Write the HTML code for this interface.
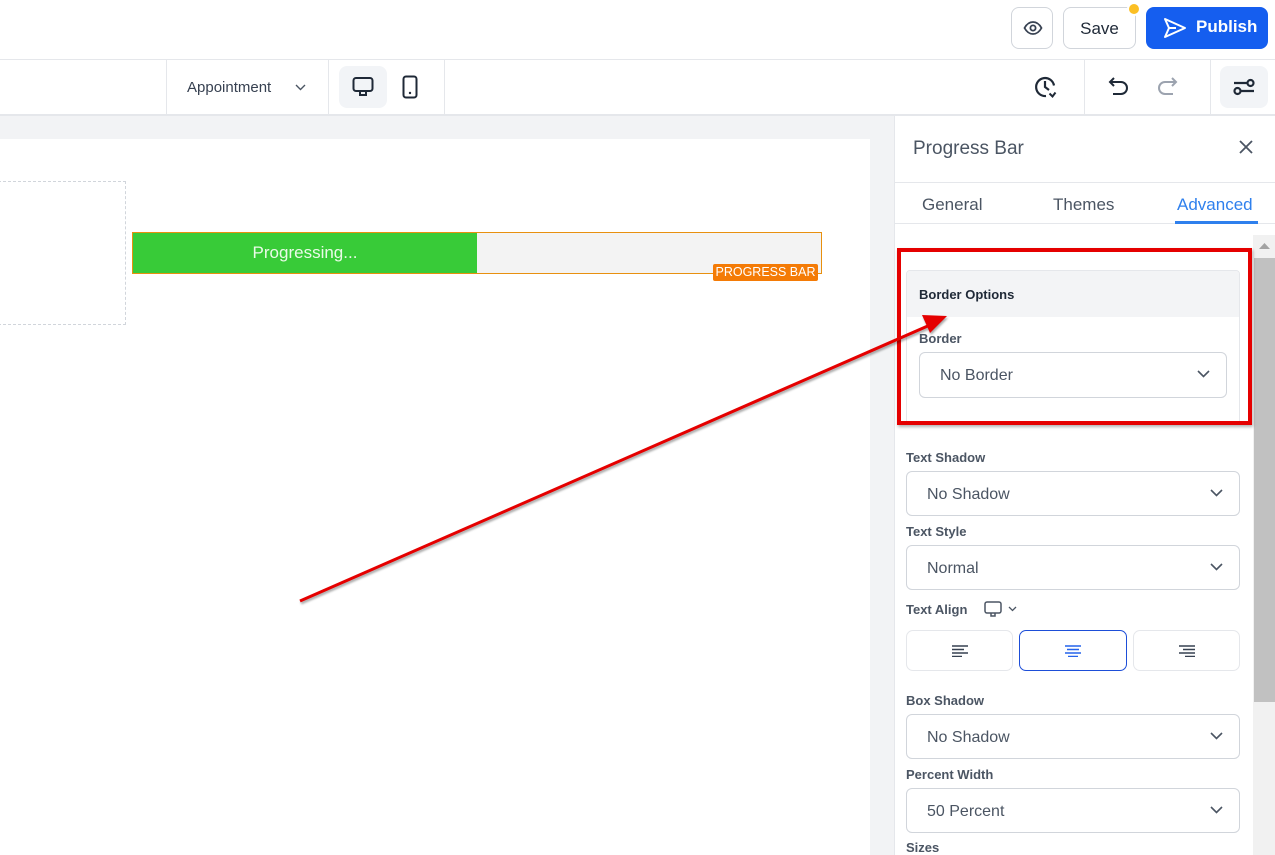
<!DOCTYPE html>
<html><head><meta charset="utf-8"><style>
*{box-sizing:border-box;margin:0;padding:0}
body{width:1275px;height:855px;overflow:hidden;position:relative;background:#fff;font-family:"Liberation Sans",sans-serif;color:#374151}
.a{position:absolute}
.lbl{position:absolute;left:906px;font-size:13px;font-weight:bold;color:#4b5563}
.sel{position:absolute;left:906px;width:334px;height:45px;border:1px solid #d1d5db;border-radius:6px;font-size:16px;color:#4b5563;padding:14px 0 0 20px}
.sel svg{position:absolute;right:16px;top:17px}
.btn{position:absolute;top:630px;height:41px;border:1px solid #e5e7eb;border-radius:7px}
.btn svg{position:absolute;left:50%;top:50%;transform:translate(-50%,-50%)}
</style></head><body>
<div class="a" style="left:0;top:59px;width:1275px;height:1px;background:#e5e7eb"></div>
<div class="a" style="left:1011px;top:7px;width:42px;height:42px;border:1px solid #d1d5db;border-radius:8px">
<svg class="a" style="left:11px;top:12px" width="20" height="16" viewBox="0 0 20 16"><path d="M1.5 8C4 3.5 7 2 10 2s6 1.5 8.5 6C16 12.5 13 14 10 14S4 12.5 1.5 8z" fill="none" stroke="#374151" stroke-width="1.8"/><circle cx="10" cy="8" r="2.6" fill="none" stroke="#374151" stroke-width="1.8"/></svg></div>
<div class="a" style="left:1063px;top:7px;width:73px;height:42px;border:1px solid #d1d5db;border-radius:8px;font-size:17px;color:#1f2937;text-align:center;line-height:42px">Save</div>
<div class="a" style="left:1127px;top:2px;width:14px;height:14px;border-radius:50%;background:#fbbf24;border:2px solid #fff"></div>
<div class="a" style="left:1146px;top:7px;width:122px;height:42px;border-radius:8px;background:#155eef;color:#fff;font-size:17px;font-weight:bold;line-height:40px;padding-left:50px">Publish
<svg class="a" style="left:17px;top:10px" width="24" height="22" viewBox="0 0 24 22"><path d="M2 2l20 9-20 9 4-9z M6 11h7" fill="none" stroke="#fff" stroke-width="2" stroke-linejoin="round"/></svg></div>

<div class="a" style="left:0;top:114px;width:1275px;height:2px;background:#e5e7eb"></div>
<div class="a" style="left:166px;top:60px;width:1px;height:54px;background:#e5e7eb"></div>
<div class="a" style="left:328px;top:60px;width:1px;height:54px;background:#e5e7eb"></div>
<div class="a" style="left:444px;top:60px;width:1px;height:54px;background:#e5e7eb"></div>
<div class="a" style="left:1084px;top:60px;width:1px;height:54px;background:#e5e7eb"></div>
<div class="a" style="left:1210px;top:60px;width:1px;height:54px;background:#e5e7eb"></div>
<div class="a" style="left:187px;top:79px;font-size:15px;color:#374151">Appointment</div>
<svg class="a" style="left:295px;top:84px" width="11" height="7" viewBox="0 0 11 7"><path d="M1 1l4.5 4.5L10 1" fill="none" stroke="#4b5563" stroke-width="1.4"/></svg>
<div class="a" style="left:339px;top:66px;width:48px;height:42px;background:#f2f4f7;border-radius:8px"></div>
<svg class="a" style="left:352px;top:76px" width="22" height="22" viewBox="0 0 22 22"><rect x="1.5" y="2" width="19" height="13" rx="2.5" fill="none" stroke="#1f2937" stroke-width="2"/><path d="M8 15v4h6v-4" fill="none" stroke="#1f2937" stroke-width="2"/></svg>
<svg class="a" style="left:402px;top:75px" width="16" height="24" viewBox="0 0 16 24"><rect x="1.5" y="1.5" width="13" height="21" rx="2.5" fill="none" stroke="#1f2937" stroke-width="2"/><circle cx="8" cy="18" r="1.2" fill="#1f2937"/></svg>
<svg class="a" style="left:1034px;top:75px" width="24" height="24" viewBox="0 0 24 24"><path d="M20 10.5A9 9 0 1 0 12 21" fill="none" stroke="#1f2937" stroke-width="2.2"/><path d="M11 6v6l4 3" fill="none" stroke="#1f2937" stroke-width="2.2"/><path d="M15.5 18.5l3 3 3-4" fill="none" stroke="#1f2937" stroke-width="2"/></svg>
<svg class="a" style="left:1108px;top:76px" width="22" height="20" viewBox="0 0 22 20"><path d="M6 2L2 6l4 4M2 6h11a6 6 0 0 1 0 12H5" fill="none" stroke="#1f2937" stroke-width="2"/></svg>
<svg class="a" style="left:1156px;top:76px" width="22" height="20" viewBox="0 0 22 20"><path d="M16 2l4 4-4 4M20 6H9a6 6 0 0 0 0 12h8" fill="none" stroke="#9ca3af" stroke-width="2"/></svg>
<div class="a" style="left:1220px;top:66px;width:48px;height:42px;background:#f2f4f7;border-radius:8px"></div>
<svg class="a" style="left:1232px;top:77px" width="24" height="20" viewBox="0 0 24 20"><path d="M2 6h13M9 14h13" stroke="#1f2937" stroke-width="2.2"/><circle cx="18.5" cy="6" r="3" fill="#f2f4f7" stroke="#1f2937" stroke-width="2.2"/><circle cx="5.5" cy="14" r="3" fill="#f2f4f7" stroke="#1f2937" stroke-width="2.2"/></svg>

<div class="a" style="left:0;top:116px;width:894px;height:739px;background:#f2f3f5"></div>
<div class="a" style="left:0;top:139px;width:870px;height:716px;background:#fff"></div>
<div class="a" style="left:-2px;top:181px;width:128px;height:144px;border:1px dashed #d1d5db"></div>
<div class="a" style="left:132px;top:232px;width:690px;height:42px;border:1px solid #e8900f;background:#f3f3f3"></div>
<div class="a" style="left:133px;top:233px;width:344px;height:40px;background:#38cb38;color:#eafbe8;font-size:17px;text-align:center;line-height:40px">Progressing...</div>
<div class="a" style="left:713px;top:264px;width:105px;height:17px;background:#f47b06;color:#fff;font-size:12.5px;text-align:center;line-height:17px;border-radius:2px">PROGRESS BAR</div>

<div class="a" style="left:894px;top:116px;width:381px;height:739px;background:#fff;border-left:1px solid #e5e7eb"></div>
<div class="a" style="left:913px;top:138px;font-size:19px;color:#4b5563">Progress Bar</div>
<svg class="a" style="left:1238px;top:139px" width="16" height="16" viewBox="0 0 16 16"><path d="M2 2l12 12M14 2L2 14" stroke="#4b5563" stroke-width="1.8"/></svg>
<div class="a" style="left:895px;top:182px;width:380px;height:1px;background:#e5e7eb"></div>
<div class="a" style="left:895px;top:223px;width:380px;height:1px;background:#e5e7eb"></div>
<div class="a" style="left:922px;top:195px;font-size:17px;color:#4b5563">General</div>
<div class="a" style="left:1053px;top:195px;font-size:17px;color:#4b5563">Themes</div>
<div class="a" style="left:1177px;top:195px;font-size:17px;color:#2f80ed">Advanced</div>
<div class="a" style="left:1175px;top:221px;width:83px;height:3px;background:#2f80ed"></div>

<div class="a" style="left:1253px;top:235px;width:22px;height:620px;background:#f1f1f1"></div>
<svg class="a" style="left:1259px;top:242px" width="11" height="8"><path d="M0 7L5.5 1 11 7z" fill="#a3a3a3"/></svg>
<div class="a" style="left:1254px;top:258px;width:21px;height:444px;background:#c1c1c1"></div>

<div class="a" style="left:906px;top:270px;width:334px;height:155px;border:1px solid #e5e7eb;border-radius:4px;overflow:hidden">
<div style="height:46px;background:#f3f4f6;font-size:13px;font-weight:bold;color:#1f2937;padding:16px 0 0 12px">Border Options</div></div>
<div class="a" style="left:919px;top:331px;font-size:13px;font-weight:bold;color:#4b5563">Border</div>
<div class="sel" style="left:919px;top:352px;width:308px;height:46px">No Border<svg width="13" height="8" viewBox="0 0 13 8"><path d="M1 1l5.5 5.5L12 1" fill="none" stroke="#4b5563" stroke-width="1.6"/></svg></div>
<div class="a" style="left:897px;top:248px;width:355px;height:177px;border:4px solid #e50000;box-shadow:1px 2px 3px rgba(0,0,0,.3)"></div>

<div class="lbl" style="top:450px">Text Shadow</div>
<div class="sel" style="top:471px">No Shadow<svg width="13" height="8" viewBox="0 0 13 8"><path d="M1 1l5.5 5.5L12 1" fill="none" stroke="#4b5563" stroke-width="1.6"/></svg></div>
<div class="lbl" style="top:524px">Text Style</div>
<div class="sel" style="top:545px">Normal<svg width="13" height="8" viewBox="0 0 13 8"><path d="M1 1l5.5 5.5L12 1" fill="none" stroke="#4b5563" stroke-width="1.6"/></svg></div>
<div class="lbl" style="top:602px">Text Align</div>
<svg class="a" style="left:984px;top:601px" width="36" height="16" viewBox="0 0 36 16"><rect x="1" y="1" width="16" height="11" rx="2" fill="none" stroke="#4b5563" stroke-width="1.5"/><path d="M7 12v3h4v-3" fill="none" stroke="#4b5563" stroke-width="1.5"/><path d="M25 6l3.5 3.5L32 6" fill="none" stroke="#4b5563" stroke-width="1.3"/></svg>
<div class="btn" style="left:906px;width:107px"><svg width="16" height="12" viewBox="0 0 16 12"><path d="M0 1h16M0 4.5h12M0 8h16M0 11.5h10" stroke="#374151" stroke-width="1.4"/></svg></div>
<div class="btn" style="left:1019px;width:108px;border-color:#1d4ed8"><svg width="16" height="12" viewBox="0 0 16 12"><path d="M0 1h16M2 4.5h12M0 8h16M3 11.5h10" stroke="#2563eb" stroke-width="1.4"/></svg></div>
<div class="btn" style="left:1133px;width:107px"><svg width="16" height="12" viewBox="0 0 16 12"><path d="M0 1h16M4 4.5h12M0 8h16M6 11.5h10" stroke="#374151" stroke-width="1.4"/></svg></div>
<div class="lbl" style="top:693px">Box Shadow</div>
<div class="sel" style="top:714px">No Shadow<svg width="13" height="8" viewBox="0 0 13 8"><path d="M1 1l5.5 5.5L12 1" fill="none" stroke="#4b5563" stroke-width="1.6"/></svg></div>
<div class="lbl" style="top:767px">Percent Width</div>
<div class="sel" style="top:788px">50 Percent<svg width="13" height="8" viewBox="0 0 13 8"><path d="M1 1l5.5 5.5L12 1" fill="none" stroke="#4b5563" stroke-width="1.6"/></svg></div>
<div class="lbl" style="top:840px">Sizes</div>

<svg class="a" style="left:0;top:0" width="1275" height="855"><g style="filter:drop-shadow(1px 2px 1px rgba(0,0,0,.35))"><line x1="300" y1="601" x2="930" y2="325" stroke="#e50000" stroke-width="3"/><path d="M947 316L922 315L930 333Z" fill="#e50000"/></g></svg>
</body></html>
